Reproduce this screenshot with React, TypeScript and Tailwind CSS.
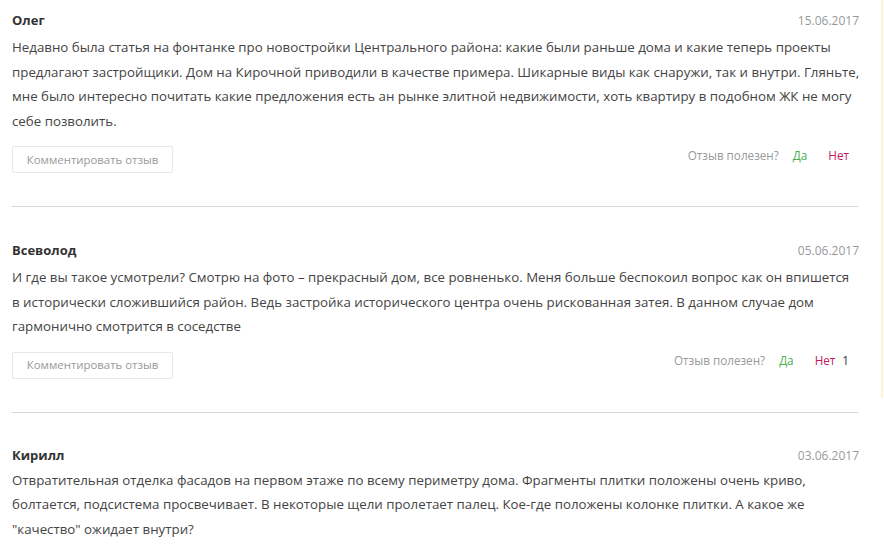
const reviews = [
  {
    name: "Олег",
    date: "15.06.2017",
    text: "Недавно была статья на фонтанке про новостройки Центрального района: какие были раньше дома и какие теперь проекты предлагают застройщики. Дом на Кирочной приводили в качестве примера. Шикарные виды как снаружи, так и внутри. Гляньте, мне было интересно почитать какие предложения есть ан рынке элитной недвижимости, хоть квартиру в подобном ЖК не могу себе позволить.",
    no: "",
  },
  {
    name: "Всеволод",
    date: "05.06.2017",
    text: "И где вы такое усмотрели? Смотрю на фото – прекрасный дом, все ровненько. Меня больше беспокоил вопрос как он впишется в\u00A0исторически сложившийся район. Ведь застройка исторического центра очень рискованная затея. В данном случае дом гармонично смотрится в соседстве",
    no: "1",
  },
  {
    name: "Кирилл",
    date: "03.06.2017",
    text: "Отвратительная отделка фасадов на первом этаже по всему периметру дома. Фрагменты плитки положены очень криво, болтается, подсистема просвечивает. В некоторые щели пролетает палец. Кое-где положены колонке плитки. А какое же \"качество\" ожидает внутри?",
    no: "",
    last: true,
  },
];

export default function App() {
  return (
    <div className="relative w-[884px] h-[552px] overflow-hidden bg-white font-['Open_Sans',sans-serif]">
      <div className="absolute top-0 right-[1px] w-[2px] h-[398px] bg-[#fdf3d4]" />
      <div className="flex flex-col pl-3 pr-[20px]">
        {reviews.map((r, i) => (
          <div key={i} className="flex flex-col">
            <div className={`flex flex-col ${i === 0 ? "pt-[12px]" : i === 1 ? "pt-[35px]" : "pt-[34px]"}`}>
              <div className="flex justify-between items-center h-[18px] pr-[5px]">
                <span className="text-[13px] font-bold text-[#333]">{r.name}</span>
                <span className="text-[12px] text-[#999]">{r.date}</span>
              </div>
              <p className={`${r.last ? "mt-[3px]" : "mt-[5px]"} text-[13.3px] leading-[24.5px] text-[#444]`}>{r.text}</p>
              {!r.last && (
                <div className="flex items-center justify-between mt-[13px] pb-[33px]">
                  <button className="w-[161px] h-[27px] border border-[#e8e8e8] rounded-[2px] text-[11.4px] text-[#999] bg-white">
                    Комментировать отзыв
                  </button>
                  <div className="flex items-center text-[11.7px] pr-[15px] -mt-[8px]">
                    <span className="text-[#999]">Отзыв полезен?</span>
                    <span className="ml-[14px] text-[#4caf50]">Да</span>
                    <span className="ml-[21px] text-[#c2185b]">Нет</span>
                    {r.no && <span className="ml-[7px] text-[#333]">{r.no}</span>}
                  </div>
                </div>
              )}
            </div>
            {!r.last && <div className="h-px bg-[#d3dadc] mr-[6px]" />}
          </div>
        ))}
      </div>
    </div>
  );
}
